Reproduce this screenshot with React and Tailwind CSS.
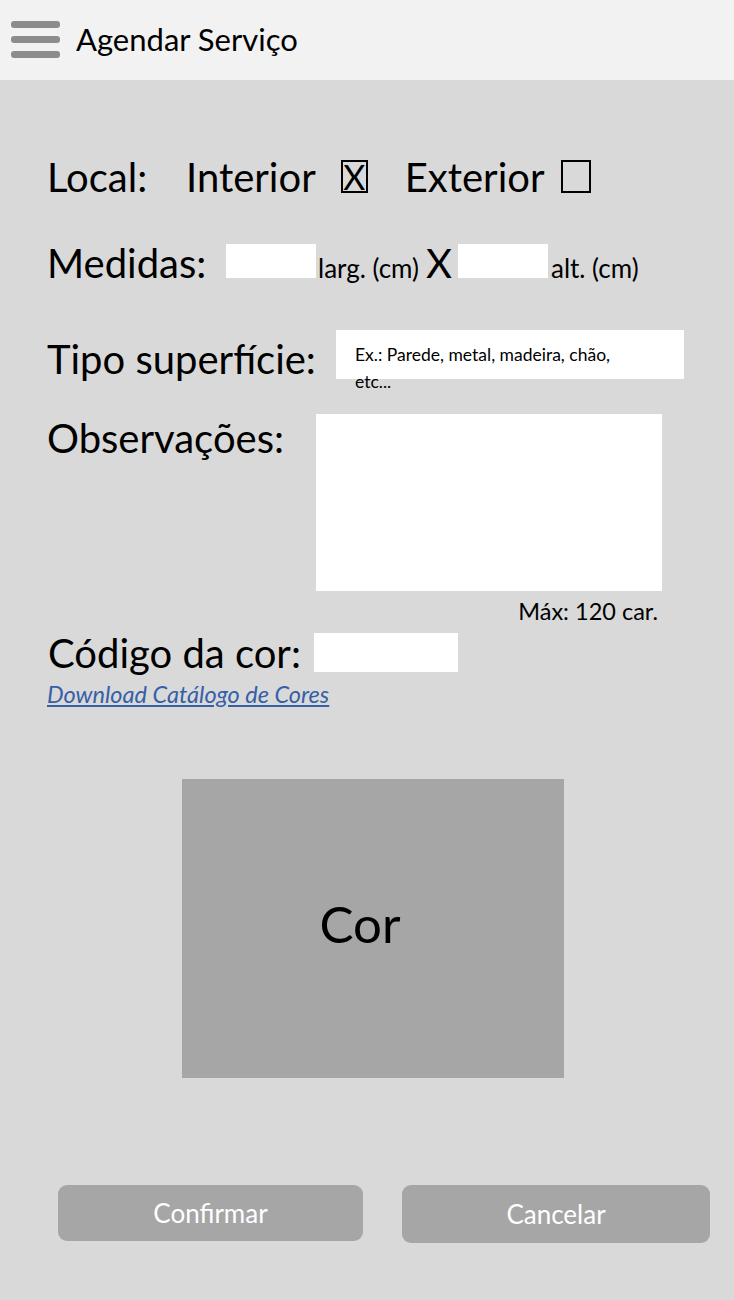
import React from 'react';

const font = { fontFamily: 'Lato, "Noto Sans", sans-serif' };

function Checkbox({ checked, wide }) {
  return (
    <div
      className={
        'h-[33px] border-2 border-black flex items-center justify-center text-[34px] leading-none ' +
        (wide ? 'w-[30px]' : 'w-[27px]')
      }
    >
      {checked ? 'X' : ''}
    </div>
  );
}

export default function App() {
  return (
    <div className="w-[734px] h-[1300px] bg-[#d9d9d9] text-black" style={font}>
      {/* Header */}
      <div className="h-[80px] bg-[#f2f2f2] flex items-center pl-[11px]">
        <div className="flex flex-col gap-[8px] w-[49px] -mt-[2px]">
          <div className="h-[7px] rounded-[3px] bg-[#8c8c8c]"></div>
          <div className="h-[7px] rounded-[3px] bg-[#8c8c8c]"></div>
          <div className="h-[7px] rounded-[3px] bg-[#8c8c8c]"></div>
        </div>
        <span className="ml-[16px] text-[31px] leading-none -mt-[2px]">Agendar Serviço</span>
      </div>

      <div className="pl-[47px]">
        {/* Local */}
        <div className="flex items-center h-[33px] mt-[80px] text-[40px] leading-none">
          <span className="w-[139px]">Local:</span>
          <span>Interior</span>
          <div className="ml-[25px]"><Checkbox checked /></div>
          <span className="ml-[37px]">Exterior</span>
          <div className="ml-[17px]"><Checkbox wide /></div>
        </div>

        {/* Medidas */}
        <div className="flex items-baseline mt-[50px] leading-none">
          <span className="text-[40px] w-[179px]">Medidas:</span>
          <div className="w-[90px] h-[34px] bg-white"></div>
          <span className="text-[26px] ml-[2px]">larg. (cm)</span>
          <span className="text-[40px] ml-[7px]">X</span>
          <div className="w-[90px] h-[34px] bg-white ml-[6px]"></div>
          <span className="text-[26px] ml-[3px]">alt. (cm)</span>
        </div>

        {/* Tipo superficie */}
        <div className="flex items-start mt-[47px]">
          <span className="text-[40px] leading-none w-[289px] mt-[9px]">Tipo superfície:</span>
          <div className="w-[348px] h-[49px] bg-white pl-[19px] pr-[50px] pt-[11px] text-[17.5px] leading-[27px]">
            Ex.: Parede, metal, madeira, chão, etc...
          </div>
        </div>

        {/* Observacoes */}
        <div className="flex items-start mt-[35px]">
          <span className="text-[40px] leading-none w-[269px] mt-[4px]">Observações:</span>
          <div className="w-[346px] h-[177px] bg-white"></div>
        </div>
        <div className="w-[611px] text-right text-[23.5px] leading-none mt-[9px]">Máx: 120 car.</div>

        {/* Codigo */}
        <div className="flex items-center mt-[9px]">
          <span className="text-[40px] leading-none ml-[1px] w-[266px]">Código da cor:</span>
          <div className="w-[144px] h-[39px] bg-white"></div>
        </div>
        <a href="#" className="block mt-[10px] text-[23.5px] leading-none italic underline text-[#3560a8] w-fit">
          Download Catálogo de Cores
        </a>
      </div>

      {/* Cor */}
      <div className="flex mt-[73px] pl-[182px]">
        <div className="w-[382px] h-[299px] bg-[#a6a6a6] flex items-center justify-center pr-[26px] text-[51px]">
          <span className="-mt-[8px]">Cor</span>
        </div>
      </div>

      {/* Buttons */}
      <div className="flex mt-[107px] pl-[58px] gap-[39px]">
        <button className="w-[305px] h-[56px] rounded-[9px] bg-[#a6a6a6] text-white text-[26px] leading-none">Confirmar</button>
        <button className="w-[308px] h-[58px] rounded-[9px] bg-[#a6a6a6] text-white text-[26px] leading-none">Cancelar</button>
      </div>
    </div>
  );
}
